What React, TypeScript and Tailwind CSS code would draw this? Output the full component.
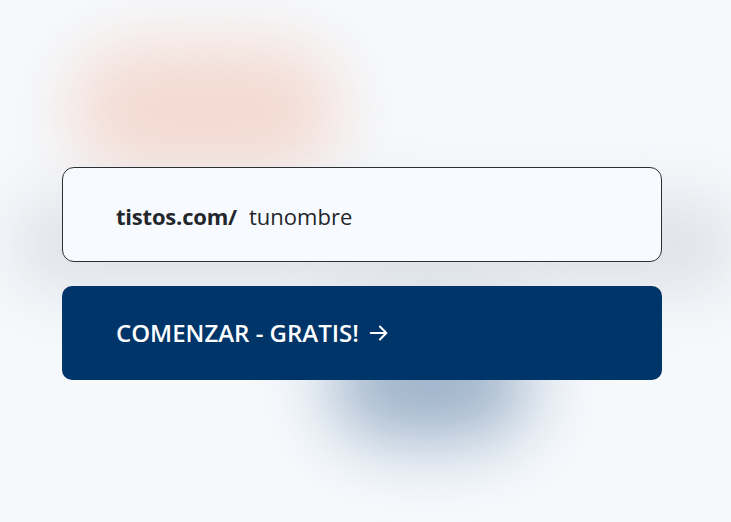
export default function App() {
  return (
    <div className="relative h-[522px] w-[731px] overflow-hidden bg-[#f6f9fc]" style={{ fontFamily: '"Open Sans", "Noto Sans", sans-serif' }}>
      {/* blurred decoration */}
      <div className="pointer-events-none absolute left-[70px] top-[45px] h-[130px] w-[270px] rounded-full bg-[#f4d9d0] blur-[35px]" />
      <div className="pointer-events-none absolute left-[10px] top-[195px] h-[100px] w-[731px] rounded-full bg-[#e0e3e8] blur-[30px]" />
      <div className="pointer-events-none absolute left-[330px] top-[325px] h-[115px] w-[200px] rounded-full bg-[#9cb1c8] blur-[35px]" />

      <div className="relative ml-[62px] flex w-[600px] flex-col gap-[24px] pt-[167px]">
        <div className="flex h-[95px] items-center rounded-[12px] border border-[#2b2f36] bg-[#f7fbff] pl-[53px] pt-[3px] text-[22px] text-[#23262b]">
          <span className="font-bold tracking-[-0.2px]">tistos.com/</span>
          <span className="ml-[12px]">tunombre</span>
        </div>
        <button className="flex h-[94px] items-center rounded-[10px] bg-[#00356a] pl-[54px] text-[24px] font-semibold text-white">
          <span>COMENZAR - GRATIS!</span>
          <svg className="ml-[9px]" width="22" height="22" viewBox="0 0 24 24" fill="none" stroke="currentColor" strokeWidth="2.2" strokeLinecap="round" strokeLinejoin="round">
            <path d="M3 12h17M13 5l7 7-7 7" />
          </svg>
        </button>
      </div>
    </div>
  );
}
